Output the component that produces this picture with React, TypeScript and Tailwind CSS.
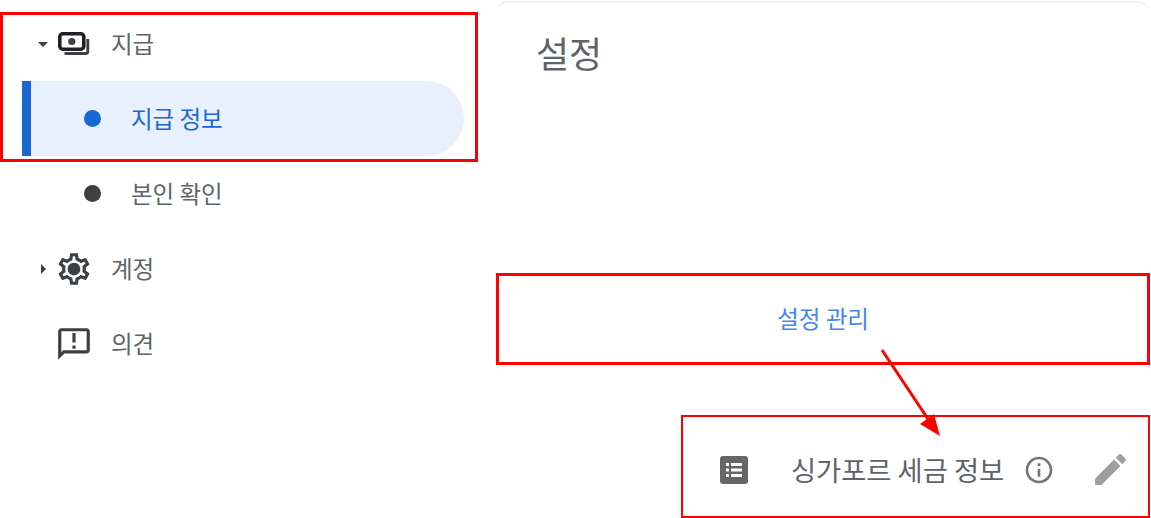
import React from 'react';
import { MdArrowDropDown, MdArrowRight, MdEdit, MdInfoOutline, MdOutlineAnnouncement, MdOutlineSettings } from 'react-icons/md';

const font = "font-['Noto_Sans_CJK_KR','Liberation_Sans',sans-serif]";

const ListIcon: React.FC = () => (
  <svg viewBox="0 0 28 28" className="w-[28px] h-[28px]">
    <rect width="28" height="28" rx="3" fill="#666666" />
    <g fill="#ffffff">
      <rect x="6" y="7" width="3" height="3" />
      <rect x="6" y="12.5" width="3" height="3" />
      <rect x="6" y="18" width="3" height="3" />
      <rect x="11" y="7" width="11" height="3" />
      <rect x="11" y="12.5" width="11" height="3" />
      <rect x="11" y="18" width="11" height="3" />
    </g>
  </svg>
);

const BillsIcon: React.FC = () => (
  <svg viewBox="0 0 32 24" className="w-[32px] h-[24px]">
    <path d="M29.8 7v12.5a2 2 0 0 1-2 2H6.5" fill="none" stroke="#3c4043" strokeWidth="2.8" />
    <rect x="1.8" y="1.8" width="24" height="15.4" rx="3" fill="#ffffff" stroke="#202124" strokeWidth="3.6" />
    <ellipse cx="13.8" cy="9.5" rx="8.5" ry="5.4" fill="#ffffff" />
    <circle cx="13.8" cy="9.5" r="3.6" fill="#3c4043" />
  </svg>
);

const MenuRow: React.FC<{ caret?: React.ReactNode; icon: React.ReactNode; label: string }> = ({ caret, icon, label }) => (
  <div className="flex items-center h-[75px] pl-[31px]">
    <span className="w-[24px] flex justify-center text-[#3c4043]">{caret}</span>
    <span className="w-[38px] flex justify-center text-[#3c4043]">{icon}</span>
    <span className="ml-[18px] text-[23.5px] leading-[30px] pb-[2px] text-[#5f6368]">{label}</span>
  </div>
);

const App: React.FC = () => {
  return (
    <div className={`${font} relative flex w-[1151px] h-[518px] overflow-hidden bg-white`}>
      <div className="w-[496px] shrink-0 pt-[12px]">
        <div className="w-[478px] h-[150px] border-[3px] border-[#ff0000]">
          <div className="-mt-[9px] -ml-[3px]">
            <MenuRow caret={<MdArrowDropDown size={26} />} icon={<BillsIcon />} label="지급" />
          </div>
          <div className="flex items-center h-[75px] ml-[19px] w-[442px] bg-[#e8f0fe] border-l-[9px] border-[#1967d2] rounded-r-[38px]">
            <span className="ml-[53px] w-[17px] h-[17px] rounded-full bg-[#1967d2]" />
            <span className="ml-[30px] text-[23.5px] leading-[30px] pb-[2px] text-[#1967d2]">지급 정보</span>
          </div>
        </div>
        <div className="flex items-center h-[75px] -mt-[6px] pl-[84px]">
          <span className="w-[17px] h-[17px] rounded-full bg-[#3c4043]" />
          <span className="ml-[30px] text-[23.5px] leading-[30px] pb-[2px] text-[#5f6368]">본인 확인</span>
        </div>
        <MenuRow
          caret={<MdArrowRight size={26} />}
          icon={
            <span className="relative flex items-center justify-center">
              <MdOutlineSettings size={38} />
              <span className="absolute w-[10px] h-[10px] rounded-full bg-[#3c4043]" />
            </span>
          }
          label="계정"
        />
        <MenuRow icon={<MdOutlineAnnouncement size={38} />} label="의견" />
      </div>

      <div className="flex-1 flex flex-col pr-[1px]">
        <div className="h-[272px] mt-[1px] rounded-t-[12px] border-t-[2px] border-[#f0f0f3] pl-[40px] pt-[23px]">
          <h1 className="text-[36px] leading-[52px] text-[#5f6368]">설정</h1>
        </div>
        <div className="h-[92px] flex items-center justify-center border-[3px] border-[#ff0000]">
          <span className="text-[23.5px] leading-[30px] pb-[2px] text-[#4285f4]">설정 관리</span>
        </div>
        <div className="mt-[50px] ml-[185px] h-[103px] flex items-center border-2 border-[#ff0000] pt-[6px]">
          <span className="ml-[37px] flex"><ListIcon /></span>
          <span className="ml-[43px] text-[27.3px] leading-[34px] pb-[2px] text-[#5f6368] whitespace-nowrap">싱가포르 세금 정보</span>
          <MdInfoOutline size={32} className="ml-[19px] text-[#757575]" />
          <MdEdit size={41} className="ml-[35px] text-[#9e9e9e]" />
        </div>
      </div>

      {/* annotation arrow */}
      <svg className="absolute left-[870px] top-[340px] w-[90px] h-[110px]" viewBox="0 0 90 110">
        <line x1="12" y1="10" x2="62" y2="85" stroke="#ff0000" strokeWidth="3" />
        <polygon points="70,96 50,84 64,74" fill="#ff0000" />
      </svg>
    </div>
  );
};

export default App;
